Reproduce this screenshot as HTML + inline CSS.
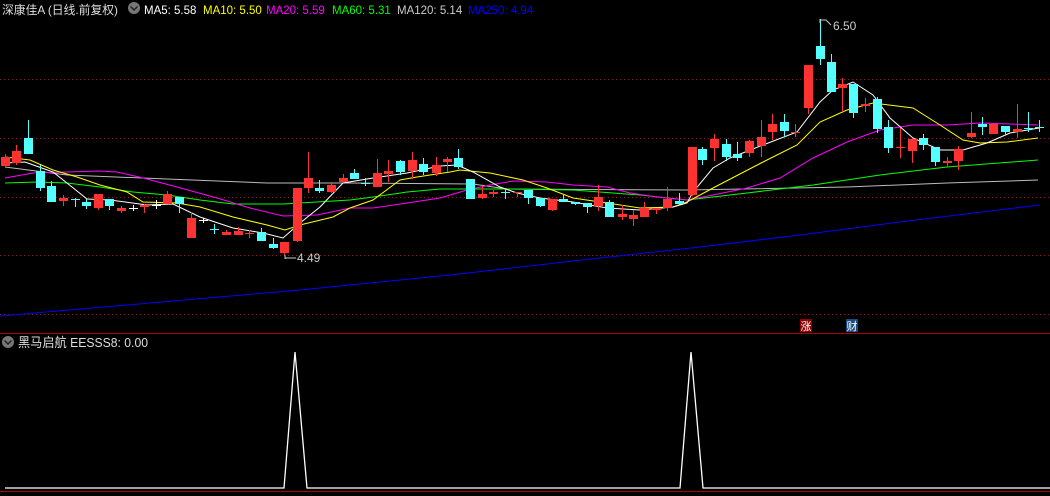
<!DOCTYPE html>
<html><head><meta charset="utf-8"><style>
html,body{margin:0;padding:0;background:#000;width:1050px;height:496px;overflow:hidden}
svg{display:block}
text{font-family:"Liberation Sans","Noto Sans CJK SC",sans-serif}
</style></head><body>
<svg id="s" width="1050" height="496" xmlns="http://www.w3.org/2000/svg">
<rect width="1050" height="496" fill="#000"/>
<g stroke="#8b1a1a" stroke-width="1" stroke-dasharray="1,3">
<line x1="0" y1="79.5" x2="1050" y2="79.5"/>
<line x1="0" y1="138.5" x2="1050" y2="138.5"/>
<line x1="0" y1="197.5" x2="1050" y2="197.5"/>
<line x1="0" y1="255.5" x2="1050" y2="255.5"/>
<line x1="0" y1="314.5" x2="1050" y2="314.5"/>
</g>
<line x1="0" y1="333.5" x2="1050" y2="333.5" stroke="#b00000"/>
<line x1="0" y1="491.5" x2="1050" y2="491.5" stroke="#b00000"/>
<g id="lines" fill="none" stroke-width="1"></g>
<g id="cndl"></g>
<!-- header -->
<text x="2" y="14" font-size="12" fill="#ddd" textLength="116" lengthAdjust="spacingAndGlyphs">深康佳A (日线.前复权)</text>
<circle cx="134" cy="8" r="6" fill="#777"/>
<path d="M130.5 6.5 L134 10 L137.5 6.5" stroke="#222" stroke-width="1.5" fill="none"/>
<text x="144" y="14" font-size="11.5" fill="#fff">MA5: 5.58</text>
<text x="203" y="14" font-size="11.5" fill="#ffff00">MA10: 5.50</text>
<text x="266" y="14" font-size="11.5" fill="#ff00ff">MA20: 5.59</text>
<text x="332" y="14" font-size="11.5" fill="#00ff00">MA60: 5.31</text>
<text x="397" y="14" font-size="11.5" fill="#ccc">MA120: 5.14</text>
<text x="468" y="14" font-size="11.5" fill="#0000ff">MA250: 4.94</text>
<!-- annotations -->
<path d="M820 19 L820 23 M820 20 L826 20 L831 25" stroke="#ccc" fill="none"/>
<text x="833" y="30" font-size="12" fill="#ccc">6.50</text>
<path d="M285 255 L285 259 M285 258 L296 258" stroke="#ccc" fill="none"/>
<text x="297" y="262" font-size="12" fill="#ccc">4.49</text>
<rect x="800" y="319" width="12" height="13" fill="#8b0000"/>
<text x="800.5" y="330" font-size="11" fill="#fff">涨</text>
<rect x="846" y="319" width="12" height="13" fill="#174a80"/>
<text x="846.5" y="330" font-size="11" fill="#fff">财</text>
<!-- lower panel -->
<circle cx="8" cy="342" r="6" fill="#777"/>
<path d="M4.5 340.5 L8 344 L11.5 340.5" stroke="#222" stroke-width="1.5" fill="none"/>
<text x="18" y="347" font-size="13" fill="#ddd" textLength="130" lengthAdjust="spacingAndGlyphs">黑马启航  EESSS8: 0.00</text>
<polyline points="5,488 284,488 295,352 307,488 680,488 691,352 703,488 1050,488" fill="none" stroke="#fff" stroke-width="1.3"/>
</svg>
<script>
var NS="http://www.w3.org/2000/svg";
var L=document.getElementById('lines');
function pl(c,pts){var p=document.createElementNS(NS,'polyline');p.setAttribute('points',pts);p.setAttribute('stroke',c);L.appendChild(p);}
pl('#0000ff',"0,316 150,303 300,290 450,275 600,258 700,247 800,235 900,222 1040,205");
pl('#bbbbbb',"5,167 67,175 167,179 267,183 350,183 473,184 507,189 687,190 847,187 947,183 1038,180");
pl('#00ff00',"5,183 37,182 67,183 100,187 133,192 167,195 200,200 233,204 283,204 350,200 373,197 407,192 440,189 507,189 573,190 640,195 687,200 747,193 813,185 880,175 947,167 1038,160");
pl('#ff00ff',"5,178 33,173 67,172 100,171 117,172 143,178 177,187 217,198 250,208 283,216 317,215 350,208 373,208 407,203 440,198 467,190 490,185 513,181 547,182 573,185 607,187 630,193 657,197 687,200 713,195 747,188 780,178 813,158 847,142 880,130 913,125 947,125 980,123 1038,125");
pl('#ffff00',"5,157 30,160 53,170 77,177 100,185 127,192 143,202 177,203 200,207 233,217 267,225 285,230 300,225 333,217 350,208 373,200 400,180 417,177 450,172 460,170 490,173 523,180 547,188 573,198 607,203 640,208 673,207 687,202 713,188 763,162 797,145 820,122 847,110 873,103 913,108 940,125 963,140 980,143 1007,142 1038,138");
pl('#ffffff',"5,163 25,162 53,172 72,187 87,199 110,200 147,205 173,204 200,217 233,228 263,233 283,238 300,223 320,207 343,183 373,178 407,173 440,166 457,165 473,172 500,187 517,193 540,198 573,202 607,208 640,210 673,207 687,203 693,192 713,168 730,158 763,145 797,132 820,102 833,90 853,82 873,95 890,118 913,138 940,150 963,150 987,143 1010,133 1039,128");
var C=[[5,157,166,154,167,'r'],[16,151,163,145,165,'r'],[28,138,154,120,154,'c'],[40,171,188,165,191,'c'],[51,186,202,181,202,'c'],[63,198,201,195,206,'r'],[75,199,199,198,207,'c'],[86,202,206,199,209,'c'],[98,194,208,194,210,'r'],[109,199,206,199,210,'c'],[121,208,211,206,213,'r'],[133,208,208,205,211,'w'],[144,205,207,204,213,'r'],[156,205,205,200,209,'w'],[167,194,204,191,204,'r'],[179,197,204,197,213,'c'],[191,218,238,212,238,'r'],[203,220,220,218,223,'w'],[214,229,229,224,234,'c'],[226,232,235,230,235,'r'],[238,231,235,227,235,'r'],[249,233,233,230,238,'r'],[261,232,241,228,241,'c'],[273,244,248,238,249,'c'],[284,242,253,242,255,'r'],[297,188,241,188,242,'r'],[308,178,188,152,193,'r'],[319,188,191,180,193,'c'],[331,185,192,182,193,'r'],[343,178,182,174,182,'r'],[354,173,179,169,179,'c'],[365,183,183,178,186,'c'],[377,173,187,159,187,'r'],[388,171,174,160,182,'r'],[400,161,172,160,175,'c'],[412,160,171,152,179,'r'],[423,164,172,158,175,'c'],[436,165,173,157,176,'r'],[447,159,162,157,172,'r'],[458,158,167,149,169,'c'],[470,179,199,179,199,'c'],[482,194,198,186,199,'r'],[493,192,194,190,197,'r'],[505,192,192,188,199,'c'],[517,192,193,192,197,'r'],[528,190,198,190,204,'c'],[540,198,206,198,207,'c'],[552,199,210,199,211,'r'],[563,199,202,194,202,'c'],[575,202,204,202,205,'c'],[587,203,207,203,213,'c'],[598,197,206,185,211,'r'],[609,202,217,200,217,'c'],[622,214,217,205,220,'r'],[633,215,219,210,226,'r'],[644,208,217,202,217,'r'],[656,208,210,208,214,'r'],[667,199,208,187,211,'r'],[679,201,204,193,204,'c'],[692,147,195,147,196,'r'],[702,149,160,147,165,'c'],[714,139,148,134,161,'r'],[726,144,157,139,161,'c'],[737,154,158,142,161,'c'],[749,141,153,140,157,'r'],[761,137,146,120,157,'r'],[772,124,132,114,140,'r'],[784,122,131,114,137,'c'],[795,132,132,124,137,'r'],[808,65,108,65,114,'r'],[820,46,59,19,65,'c'],[831,62,92,54,92,'c'],[842,84,88,78,112,'r'],[853,84,113,84,118,'c'],[865,104,106,98,112,'r'],[877,99,129,97,133,'c'],[888,127,148,120,153,'c'],[900,147,147,128,158,'r'],[912,139,151,139,163,'r'],[923,138,145,134,150,'c'],[935,147,162,147,166,'c'],[947,161,163,157,167,'r'],[958,149,161,146,170,'r'],[971,133,137,112,138,'r'],[982,124,127,117,135,'c'],[993,124,134,123,134,'r'],[1005,126,132,126,135,'c'],[1017,129,132,104,138,'r'],[1028,128,128,112,132,'c'],[1039,127,127,120,132,'c']];
var G=document.getElementById('cndl');var h='';
C.forEach(function(c){var col=c[5]=='r'?'#ff3232':(c[5]=='c'?'#54ffff':'#ffffff');
h+='<line x1="'+(c[0]+.5)+'" y1="'+c[3]+'" x2="'+(c[0]+.5)+'" y2="'+c[4]+'" stroke="'+col+'"/>';
var bh=Math.max(c[2]-c[1],1);
h+='<rect x="'+(c[0]-4)+'" y="'+c[1]+'" width="9" height="'+bh+'" fill="'+col+'"/>';});
G.innerHTML=h;
</script>
</body></html>
